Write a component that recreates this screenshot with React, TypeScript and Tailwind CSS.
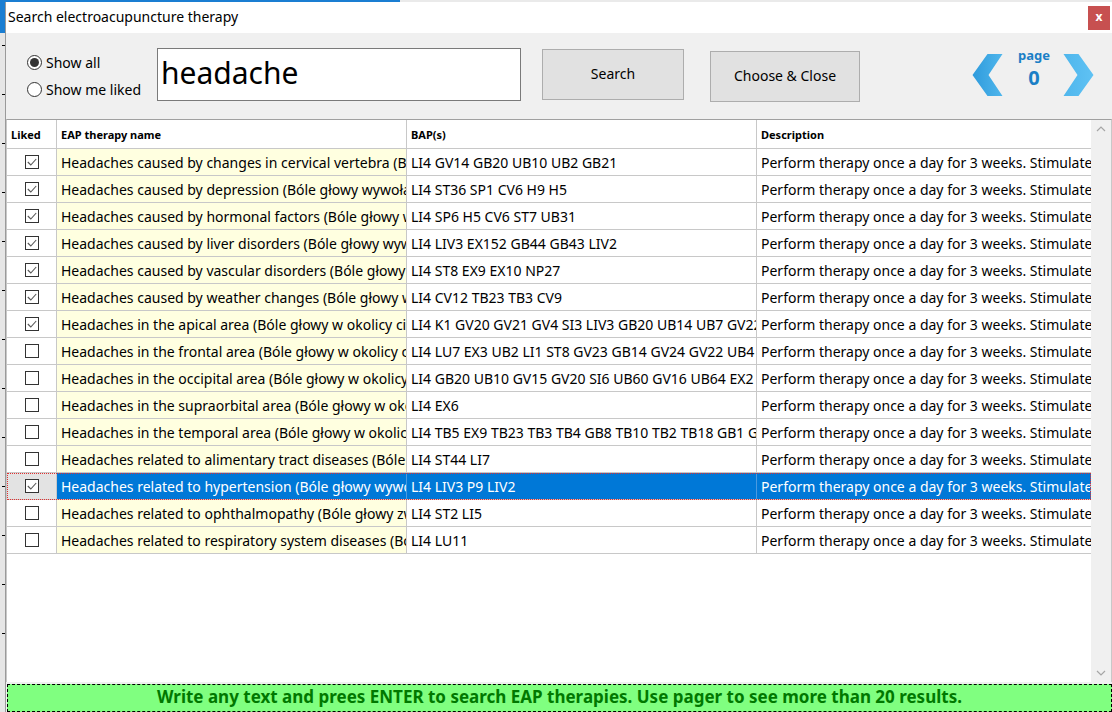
import React from "react";

type Row = { liked: boolean; name: string; bap: string };

const rows: Row[] = [
  { liked: true, name: "Headaches caused by changes in cervical vertebra (Bóle głowy wywołane zmianami w kręgosłupie szyjnym)", bap: "LI4 GV14 GB20 UB10 UB2 GB21" },
  { liked: true, name: "Headaches caused by depression (Bóle głowy wywołane depresją)", bap: "LI4 ST36 SP1 CV6 H9 H5" },
  { liked: true, name: "Headaches caused by hormonal factors (Bóle głowy wywołane czynnikami hormonalnymi)", bap: "LI4 SP6 H5 CV6 ST7 UB31" },
  { liked: true, name: "Headaches caused by liver disorders (Bóle głowy wywołane zaburzeniami wątroby)", bap: "LI4 LIV3 EX152 GB44 GB43 LIV2" },
  { liked: true, name: "Headaches caused by vascular disorders (Bóle głowy wywołane zaburzeniami naczyniowymi)", bap: "LI4 ST8 EX9 EX10 NP27" },
  { liked: true, name: "Headaches caused by weather changes (Bóle głowy wywołane zmianami pogody)", bap: "LI4 CV12 TB23 TB3 CV9" },
  { liked: true, name: "Headaches in the apical area (Bóle głowy w okolicy ciemieniowej)", bap: "LI4 K1 GV20 GV21 GV4 SI3 LIV3 GB20 UB14 UB7 GV22 GV19" },
  { liked: false, name: "Headaches in the frontal area (Bóle głowy w okolicy czołowej)", bap: "LI4 LU7 EX3 UB2 LI1 ST8 GV23 GB14 GV24 GV22 UB4 UB3" },
  { liked: false, name: "Headaches in the occipital area (Bóle głowy w okolicy potylicznej)", bap: "LI4 GB20 UB10 GV15 GV20 SI6 UB60 GV16 UB64 EX2 GB19" },
  { liked: false, name: "Headaches in the supraorbital area (Bóle głowy w okolicy nadoczodołowej)", bap: "LI4 EX6" },
  { liked: false, name: "Headaches in the temporal area (Bóle głowy w okolicy skroniowej)", bap: "LI4 TB5 EX9 TB23 TB3 TB4 GB8 TB10 TB2 TB18 GB1 GB41" },
  { liked: false, name: "Headaches related to alimentary tract diseases (Bóle głowy związane z chorobami przewodu pokarmowego)", bap: "LI4 ST44 LI7" },
  { liked: true, name: "Headaches related to hypertension (Bóle głowy wywołane nadciśnieniem)", bap: "LI4 LIV3 P9 LIV2" },
  { liked: false, name: "Headaches related to ophthalmopathy (Bóle głowy związane z chorobami oczu)", bap: "LI4 ST2 LI5" },
  { liked: false, name: "Headaches related to respiratory system diseases (Bóle głowy związane z chorobami układu oddechowego)", bap: "LI4 LU11" },
];

const DESC = "Perform therapy once a day for 3 weeks. Stimulate each point for 1 minute.";

function Check({ checked }: { checked: boolean }) {
  return (
    <div className="w-[14px] h-[14px] border border-[#333333] bg-white flex items-center justify-center">
      {checked && (
        <svg width="10" height="8" viewBox="0 0 10 8">
          <path d="M0.8 4 L3.8 7 L9.2 1" fill="none" stroke="#555555" strokeWidth="1.1" />
        </svg>
      )}
    </div>
  );
}

function Radio({ checked }: { checked: boolean }) {
  return (
    <div className="w-[15px] h-[15px] rounded-full border border-[#333333] bg-white flex items-center justify-center">
      {checked && <div className="w-[9px] h-[9px] rounded-full bg-[#333333]" />}
    </div>
  );
}

function Chevron({ dir }: { dir: "left" | "right" }) {
  const pts = dir === "left" ? "30,0 15,0 0,21 15,42 30,42 16,21" : "0,0 15,0 30,21 15,42 0,42 14,21";
  return (
    <svg width="31" height="42" viewBox="0 0 30 42">
      <defs>
        <linearGradient id={"g" + dir} x1="0" y1="0" x2="1" y2="0">
          <stop offset="0" stopColor={dir === "left" ? "#2f9bdc" : "#4fb6ec"} />
          <stop offset="1" stopColor={dir === "left" ? "#4fb6ec" : "#5fc2f4"} />
        </linearGradient>
      </defs>
      <polygon points={pts} fill={"url(#g" + dir + ")"} />
    </svg>
  );
}

export default function App() {
  return (
    <div
      className="w-[1112px] h-[712px] bg-[#f0f0f0] flex flex-col overflow-hidden"
      style={{ fontFamily: '"Noto Sans", "Open Sans", sans-serif' }}
    >
      <div className="h-[2px] flex shrink-0">
        <div className="w-[400px] bg-[#1a7ed2]" />
        <div className="flex-1 bg-[#eaeaea]" />
      </div>
      <div className="flex flex-1 min-h-0">
        {/* background window edge */}
        <div className="w-[5px] flex flex-col shrink-0">
          <div className="h-[31px] bg-[#1a7ed2]" />
          <div className="flex-1 bg-[#e6e6e6] flex flex-col items-end pt-[12px] gap-[48px]">
            <div className="w-[3px] h-[1px] bg-black" />
            <div className="w-[3px] h-[1px] bg-black" />
            <div className="w-[3px] h-[1px] bg-black" />
            <div className="w-[3px] h-[1px] bg-black" />
            <div className="w-[3px] h-[1px] bg-black" />
            <div className="w-[3px] h-[1px] bg-black" />
            <div className="w-[3px] h-[1px] bg-black" />
            <div className="w-[3px] h-[1px] bg-black" />
            <div className="w-[3px] h-[1px] bg-black" />
            <div className="w-[3px] h-[1px] bg-black" />
            <div className="w-[3px] h-[1px] bg-black" />
            <div className="w-[3px] h-[1px] bg-black" />
            <div className="w-[3px] h-[1px] bg-black" />
          </div>
        </div>

        {/* window */}
        <div className="flex-1 flex flex-col bg-[#f0f0f0] border-l border-[#9a9a9a] min-w-0">
          {/* title bar */}
          <div className="h-[31px] bg-white flex items-center justify-between shrink-0">
            <div className="ml-[2px] text-[14px] text-black leading-none pb-[2px]">Search electroacupuncture therapy</div>
            <div className="w-[22px] h-[24px] mr-[2px] bg-[#c75050] flex items-center justify-center text-white text-[12px] font-bold leading-none pb-[2px]">
              x
            </div>
          </div>

          {/* toolbar */}
          <div className="h-[86px] flex items-start shrink-0">
            <div className="ml-[21px] w-[130px] flex flex-col pt-[16px]">
              <div className="h-[27px] flex items-center gap-[4px]">
                <Radio checked />
                <span className="text-[14px] text-black">Show all</span>
              </div>
              <div className="h-[27px] flex items-center gap-[4px]">
                <Radio checked={false} />
                <span className="text-[14px] text-black">Show me liked</span>
              </div>
            </div>
            <div className="mt-[15px] w-[364px] h-[53px] bg-white border border-[#7a7a7a] flex items-center pl-[3px]">
              <span className="text-[30px] text-black leading-none pb-[4px]">headache</span>
            </div>
            <div className="mt-[16px] ml-[21px] w-[142px] h-[51px] bg-[#e1e1e1] border border-[#adadad] flex items-center justify-center text-[14px] text-black pb-[2px]">
              Search
            </div>
            <div className="mt-[18px] ml-[26px] w-[150px] h-[51px] bg-[#e1e1e1] border border-[#adadad] flex items-center justify-center text-[14px] text-black pb-[2px]">
              Choose &amp; Close
            </div>
            <div className="ml-[112px] mt-[21px] flex items-start">
              <Chevron dir="left" />
              <div className="ml-[12px] w-[38px] flex flex-col items-center -mt-[9px]">
                <span className="text-[13px] font-bold text-[#1b7fc6] leading-[20px]">page</span>
                <span className="text-[20px] font-bold text-[#1b7fc6] leading-[26px]">0</span>
              </div>
              <div className="ml-[10px]">
                <Chevron dir="right" />
              </div>
            </div>
          </div>

          {/* grid */}
          <div className="flex-1 min-h-0 bg-white border-t border-[#a0a0a0] border-l border-l-[#c8c8c8] border-r border-r-[#c8c8c8] flex">
            <div className="flex-1 min-w-0 flex flex-col overflow-hidden">
              <div className="h-[29px] shrink-0 grid grid-cols-[50px_350px_350px_1fr] border-b border-[#c8c8c8] bg-white text-[11px] font-bold text-black">
                <div className="border-r border-[#c8c8c8] pl-[4px] flex items-center pt-[2px]">Liked</div>
                <div className="border-r border-[#c8c8c8] pl-[4px] flex items-center pt-[2px]">EAP therapy name</div>
                <div className="border-r border-[#c8c8c8] pl-[4px] flex items-center pt-[2px]">BAP(s)</div>
                <div className="pl-[4px] flex items-center pt-[2px] whitespace-nowrap overflow-hidden">Description</div>
              </div>
              {rows.map((r, i) => {
                const sel = i === 12;
                return (
                  <div
                    key={i}
                    className={
                      "h-[27px] shrink-0 grid grid-cols-[50px_350px_350px_1fr] text-[14px] border-b border-[#c8c8c8] " +
                      (sel ? "outline-1 outline-dotted outline-[#e03030] -outline-offset-1 bg-[#0078d7] text-white" : "text-black")
                    }
                  >
                    <div className={"border-r border-[#c8c8c8] flex items-center justify-center " + (sel ? "bg-[#e3e3e3]" : "bg-white")}>
                      <Check checked={r.liked} />
                    </div>
                    <div className={"border-r flex items-center pl-[4px] whitespace-nowrap overflow-hidden " + (sel ? "border-[#4a9ae0]" : "bg-[#ffffe0] border-[#c8c8c8]")}>
                      {r.name}
                    </div>
                    <div className={"border-r flex items-center pl-[4px] whitespace-nowrap overflow-hidden " + (sel ? "border-[#4a9ae0]" : "border-[#c8c8c8]")}>
                      {r.bap}
                    </div>
                    <div className="flex items-center pl-[4px] whitespace-nowrap overflow-hidden">{DESC}</div>
                  </div>
                );
              })}
            </div>
            {/* scrollbar */}
            <div className="w-[20px] shrink-0 bg-[#f0f0f0] flex flex-col items-center justify-between py-[6px]">
              <svg width="10" height="6" viewBox="0 0 10 6">
                <path d="M1 5 L5 1 L9 5" fill="none" stroke="#a6a6a6" strokeWidth="1.2" />
              </svg>
              <svg width="10" height="6" viewBox="0 0 10 6">
                <path d="M1 1 L5 5 L9 1" fill="none" stroke="#a6a6a6" strokeWidth="1.2" />
              </svg>
            </div>
          </div>

          {/* status bar */}
          <div className="h-[28px] shrink-0 mt-[2px] ml-[1px] bg-[#80ff80] border border-dashed border-black flex items-center justify-center">
            <span className="text-[17px] font-bold text-[#007800] pb-[2px]">
              Write any text and prees ENTER to search EAP therapies. Use pager to see more than 20 results.
            </span>
          </div>
        </div>
      </div>
    </div>
  );
}
